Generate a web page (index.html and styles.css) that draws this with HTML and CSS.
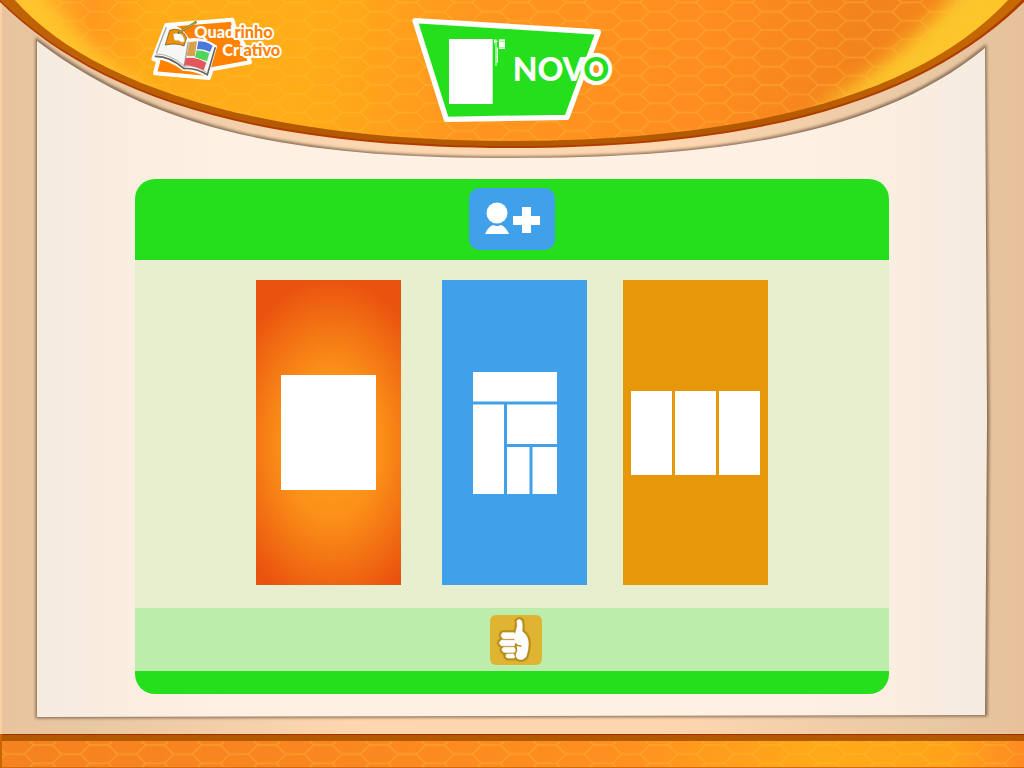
FILE: index.html
```html
<!DOCTYPE html>
<html lang="pt-BR">
<head>
<meta charset="utf-8">
<meta name="viewport" content="width=device-width, initial-scale=1">
<title>Quadrinho Criativo</title>
<link rel="stylesheet" href="styles.css">
</head>
<body>
<svg class="scene" viewBox="0 0 1024 768" preserveAspectRatio="none" aria-hidden="true">
  <defs>
    <pattern id="hex" width="168" height="55" patternUnits="userSpaceOnUse" patternTransform="scale(.33333) translate(129 35)">
      <path d="M0 0H28L56 27.500H112L140 0H168M0 55H28L56 27.500M112 27.500L140 55H168" fill="none" stroke="#ffc23c" stroke-width="4" stroke-opacity=".36"/>
    </pattern>
    <linearGradient id="frame"><stop offset="0" stop-color="#e8c49e"/><stop offset=".08" stop-color="#e8c7a3"/><stop offset=".35" stop-color="#fdd7b0"/><stop offset=".65" stop-color="#fdd7b0"/><stop offset=".92" stop-color="#e8c7a3"/><stop offset="1" stop-color="#e7c19a"/></linearGradient>
    <linearGradient id="paper"><stop offset="0" stop-color="#f6ebdf"/><stop offset=".2" stop-color="#fef0e3"/><stop offset=".8" stop-color="#fef0e3"/><stop offset="1" stop-color="#f6ebdf"/></linearGradient>
    <linearGradient id="dome" gradientUnits="userSpaceOnUse" x1="0" y1="0" x2="1024" y2="130"><stop offset="0" stop-color="#ffb42a"/><stop offset=".09" stop-color="#ff981f"/><stop offset=".15" stop-color="#ffac18"/><stop offset=".3" stop-color="#ffad18"/><stop offset=".46" stop-color="#ff961f"/><stop offset=".68" stop-color="#ff8d20"/><stop offset=".83" stop-color="#f3831d"/><stop offset="1" stop-color="#f58a1d"/></linearGradient>
    <linearGradient id="floor"><stop offset="0" stop-color="#f58220"/><stop offset=".3" stop-color="#f98620"/><stop offset=".6" stop-color="#ff8f20"/><stop offset=".8" stop-color="#ffaa18"/><stop offset=".93" stop-color="#ffa31a"/><stop offset="1" stop-color="#ff8a22"/></linearGradient>
    <linearGradient id="rim"><stop offset="0" stop-color="#c06406"/><stop offset=".3" stop-color="#b35a00"/><stop offset=".75" stop-color="#b35a00"/><stop offset="1" stop-color="#c66a04"/></linearGradient>
    <filter id="soft" x="-20%" y="-20%" width="140%" height="140%"><feGaussianBlur stdDeviation="9"/></filter>
    <filter id="shade" x="-5%" y="-5%" width="110%" height="110%"><feGaussianBlur stdDeviation="1.500"/></filter>
    <clipPath id="domeClip"><path d="M15 0C85 80 250 141 512 141C770 141 930 85 1008 0Z"/></clipPath>
  </defs>
  <rect width="1024" height="768" fill="url(#frame)"/>
  <rect width="2" height="734" fill="#fdd0a4"/>
  <path d="M37 40C160 133 300 158 512 158C724 158 880 133 985 47L988 420L986 715L37 717Z" fill="#8c7058" stroke="#8c7058" stroke-width="3" filter="url(#shade)"/>
  <path d="M37 41C160 134 300 158 512 158C724 158 880 134 985 48L987 420L985 715L37 717Z" fill="url(#paper)"/>
  <path d="M0 0V2C90 90 240 148 512 148C784 148 934 90 1024 2V0Z" fill="#b03c00"/>
  <path d="M0 0C90 88 240 146 512 146C784 146 934 88 1022 0Z" fill="url(#rim)"/>
  <g clip-path="url(#domeClip)">
    <rect width="1024" height="145" fill="url(#dome)"/>
    <path d="M-10 -30L35 -20Q75 42 160 98L110 100Q40 60 -10 0Z" fill="#ffc42c" filter="url(#soft)"/>
    <path d="M1040 -30L970 -25Q910 55 810 112Q940 95 1040 0Z" fill="#fcc62c" filter="url(#soft)"/>
    <rect width="1024" height="145" fill="url(#hex)"/>
  </g>
  <rect y="734" width="1024" height="34" fill="url(#floor)"/>
  <rect y="741" width="1024" height="27" fill="url(#hex)"/>
  <rect y="734" width="1024" height="7" fill="#b35a00"/>
  <rect y="734" width="1024" height="1" fill="#a52e00"/>
  <rect y="767" width="1024" height="1" fill="#d36c0c"/>
  <rect y="734" width="2" height="34" fill="#c86606"/>
</svg>

<header class="top">
  <a class="logo" href="#" aria-label="Quadrinho Criativo">
    <svg class="logo-art" viewBox="30 24 405 192">
      <path d="M82 45L280 29L289 60L318 110L333 157L218 178L210 204L48 190L58 152L43 147Z" fill="#ff8200" stroke="#fff" stroke-width="12" stroke-linejoin="round"/>
      <path d="M46 138L82 48Q120 43 147 91Q188 82 229 110L204 196Q164 177 135 178Q90 144 46 142Z" fill="#f6f6f4" stroke="#fff" stroke-width="10" stroke-linejoin="round"/>
      <path d="M47 139Q93 138 135 176Q168 172 205 194L229 112" fill="none" stroke="#6b6761" stroke-width="5"/>
      <path d="M50 132Q94 131 136 168Q171 164 202 187" fill="none" stroke="#b7b3ac" stroke-width="3"/>
      <path d="M82 51L52 130M148 95L135 172" fill="none" stroke="#a8a49e" stroke-width="4"/>
      <path d="M92 61Q126 48 143 83L135 108Q113 98 79 105Z" fill="#ef9000" stroke="#5d4b28" stroke-width="2"/>
      <path d="M103 72Q133 62 137 94Q128 101 119 91Q104 94 105 83Z" fill="#fff" stroke="#c6c1b6" stroke-width="2"/>
      <path d="M119 68L170 37" stroke="#6f702c" stroke-width="7" stroke-linecap="round"/>
      <path d="M120 67L169 38" stroke="#b9a648" stroke-width="4"/>
      <path d="M151 97L174 94L167 139L143 137Z" fill="#d9a04b"/>
      <path d="M178 94Q203 94 221 107L213 126Q197 117 174 117Z" fill="#4a78dd"/>
      <path d="M173 121Q194 121 211 130L204 154L168 142Z" fill="#4fd65a"/>
      <path d="M141 144Q173 141 202 158L194 181Q163 166 135 166Z" fill="#e4565c"/>
      <g class="logo-words">
        <text x="166" y="85"><tspan>Quad</tspan><tspan class="outlined">rinho</tspan></text>
        <text x="250" y="138"><tspan>Cri</tspan><tspan class="outlined">ativo</tspan></text>
      </g>
    </svg>
  </a>
  <h1 class="title">
    <svg class="title-art" viewBox="36 18 606 324" role="img" aria-label="Novo">
      <path d="M48 32L598 66L504 322L142 328Z" fill="#26df1c" stroke="#fff" stroke-width="16" stroke-linejoin="round"/>
      <path d="M150 87H281V282H150Z" fill="#fff"/>
      <path d="M287 88V100M291 88V168M295 112V158M285 94H296" stroke="#fff" stroke-width="3"/>
      <path d="M300 88H318V117H300Z" fill="#fff"/>
      <path d="M300 94H318M300 113H318" stroke="#78ea72" stroke-width="2"/>
      <text class="title-word" x="341" y="213">NOV<tspan class="title-ring" x="553">O</tspan></text>
    </svg>
  </h1>
</header>

<main class="panel">
  <div class="panel-head">
    <button class="add-user" type="button" aria-label="Adicionar personagem">
      <svg viewBox="0 0 86 62"><circle cx="28" cy="25" r="10.500" fill="#fff"/><path d="M16 46Q19 39 24 37Q28 39 32 37Q37 39 40 46Z" fill="#fff"/><path d="M53 19H62V28H71V37H62V45H53V37H44V28H53Z" fill="#fff"/></svg>
    </button>
  </div>
  <div class="choices">
    <button class="card card-single" type="button" aria-label="Um quadro">
      <svg width="95" height="115"><rect width="95" height="115" fill="#fff"/></svg>
    </button>
    <button class="card card-page" type="button" aria-label="Página de quadros">
      <svg width="84" height="122"><rect width="84" height="122" fill="#fff"/><path d="M0 31H84M32.500 31V122M32.500 73.500H84M58 73.500V122" stroke="#41a0ea" stroke-width="3" fill="none"/></svg>
    </button>
    <button class="card card-strip" type="button" aria-label="Tira de três quadros">
      <svg width="129" height="84"><rect width="129" height="84" fill="#fff"/><path d="M42.500 0V84M86.500 0V84" stroke="#e6980a" stroke-width="3"/></svg>
    </button>
  </div>
  <div class="confirm-row">
    <button class="confirm" type="button" aria-label="Confirmar">
      <svg viewBox="60 45 156 150">
        <g fill="#b78e1d" stroke="#b78e1d" stroke-width="15" stroke-linejoin="round">
          <path d="M141 62Q149 54 155 63Q158 81 156 94Q174 107 175 128Q176 149 168 170Q156 184 142 175Q133 164 139 150L142 134L134 118Q133 105 139 91Q144 79 141 62Z"/>
          <path d="M98 98H132Q139 106 133 116H100Q88 108 98 98ZM94 121H134Q141 128 134 137H95Q82 130 94 121ZM101 142H132Q139 149 133 157H102Q90 150 101 142ZM111 162H131Q138 168 132 174H112Q103 168 111 162Z"/>
        </g>
        <g fill="#fff" stroke="#fff" stroke-width="2" stroke-linejoin="round">
          <path d="M141 62Q149 54 155 63Q158 81 156 94Q174 107 175 128Q176 149 168 170Q156 184 142 175Q133 164 139 150L142 134L134 118Q133 105 139 91Q144 79 141 62Z"/>
          <path d="M98 98H132Q139 106 133 116H100Q88 108 98 98ZM94 121H134Q141 128 134 137H95Q82 130 94 121ZM101 142H132Q139 149 133 157H102Q90 150 101 142ZM111 162H131Q138 168 132 174H112Q103 168 111 162Z"/>
        </g>
        <path d="M137 132Q145 139 153 138M136 134L140 150L135 166" fill="none" stroke="#b78e1d" stroke-width="4" stroke-linecap="round"/>
      </svg>
    </button>
  </div>
  <div class="panel-foot"></div>
</main>
</body>
</html>
```
FILE: styles.css
```css
* {
  box-sizing: border-box;
}

body {
  position: relative;
  min-height: 100vh;
  margin: 0;
  padding-bottom: 74px;
  background: #e8c49e;
  font-family: Lato, "Open Sans", sans-serif;
}

.scene {
  position: absolute;
  inset: 0;
  z-index: -1;
  width: 100%;
  height: 100%;
}

svg {
  display: block;
}

button {
  margin: 0;
  padding: 0;
  border: 0;
  cursor: pointer;
}

.top {
  display: grid;
  grid-template-columns: 1fr auto 1fr;
  align-items: start;
  padding-top: 16px;
  padding-bottom: 55px;
}

.logo {
  justify-self: end;
  margin-right: 127px;
  padding-top: 2px;
}

.logo-art {
  width: 135px;
  height: 64px;
  overflow: visible;
}

.logo-words {
  fill: #fff;
  font-size: 49px;
  font-weight: 900;
}

.outlined {
  fill: #ff8200;
  stroke: #fff;
  stroke-width: 12px;
  stroke-linejoin: round;
  paint-order: stroke;
}

.title {
  margin: 0;
}

.title-art {
  width: 202px;
  height: 108px;
  overflow: visible;
}

.title-word {
  fill: #fff;
  font-size: 96px;
  font-weight: 900;
}

.title-ring {
  fill: #26df1c;
  stroke: #fff;
  stroke-width: 24px;
  stroke-linejoin: round;
  paint-order: stroke;
}

.panel {
  width: 74%;
  min-width: 560px;
  max-width: 754px;
  margin: 0 auto;
  overflow: hidden;
  border-radius: 20px;
}

.panel-head {
  display: flex;
  justify-content: center;
  padding: 9px 0 10px;
  background: #26df1c;
}

.add-user {
  width: 86px;
  height: 62px;
  border-radius: 10px;
  background: #41a0ea;
}

.choices {
  display: grid;
  grid-template-columns: 186px 181px 145px;
  justify-content: center;
  padding: 20px 0 23px;
  background: #e8efcf;
}

.card {
  display: flex;
  align-items: center;
  justify-content: center;
  width: 145px;
  height: 305px;
}

.card-single {
  background: radial-gradient(ellipse 110px 165px at 52% 54%, #ffa31c 0%, #fb9018 45%, #f06a12 80%, #ea530f 100%);
}

.card-page {
  background: #41a0ea;
}

.card-strip {
  background: #e6980a;
}

.confirm-row {
  display: flex;
  justify-content: center;
  padding: 7px 0 6px 8px;
  background: #bcedaa;
}

.confirm {
  width: 52px;
  height: 50px;
  border-radius: 6px;
  background: #dfb431;
}

.panel-foot {
  height: 23px;
  background: #26df1c;
}
```
